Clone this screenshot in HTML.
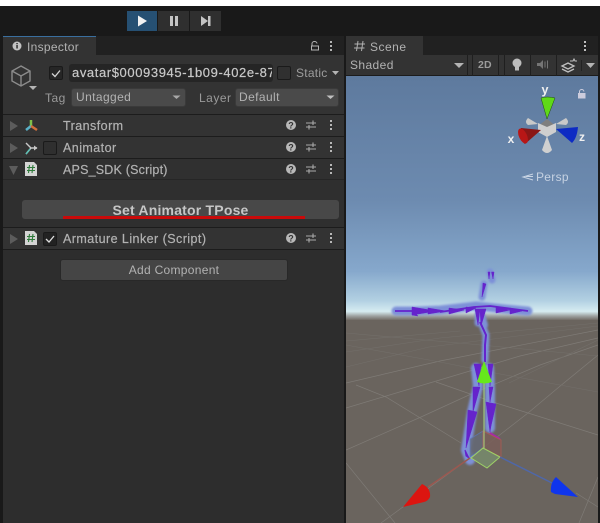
<!DOCTYPE html>
<html><head><meta charset="utf-8"><style>
html,body{margin:0;padding:0;background:#191919}
body{width:600px;height:523px;position:relative;overflow:hidden;font-family:"Liberation Sans",sans-serif;font-size:12px;color:#b2b2b2}
#w{position:absolute;left:0;top:0;width:600px;height:523px;filter:blur(.35px)}
.a{position:absolute;white-space:nowrap}
.ln{position:absolute;height:1px;left:3px;width:341px;background:#1c1c1c}
.row{position:absolute;left:3px;width:341px;height:21px;background:#333}
.t{position:absolute;font-size:12.5px;letter-spacing:.45px;white-space:nowrap;line-height:14px;-webkit-text-stroke:.2px #b2b2b2}
.dd{position:absolute;background:#4a4a4a;border-radius:3px;height:19px;border:1px solid #3a3a3a;box-sizing:border-box}
.cb{position:absolute;width:14px;height:14px;background:#222;border:1px solid #1a1a1a;border-radius:2px;box-sizing:border-box}
svg{position:absolute;left:0;top:0}
</style></head><body><div id="w">
<div class="a" style="left:0;top:0;width:600px;height:6px;background:#fff"></div>
<div class="a" style="left:127px;top:11px;width:30px;height:20px;background:#265073"></div>
<div class="a" style="left:158px;top:11px;width:31px;height:20px;background:#2f2f2f"></div>
<div class="a" style="left:190px;top:11px;width:31px;height:20px;background:#2f2f2f"></div>

<div class="a" style="left:3px;top:36px;width:341px;height:487px;background:#2d2d2d"></div>
<div class="a" style="left:3px;top:36px;width:341px;height:19px;background:#212121"></div>
<div class="a" style="left:3px;top:55px;width:341px;height:60px;background:#333"></div>
<div class="a" style="left:3px;top:36px;width:93px;height:19px;background:#333;border-top:1px solid #3a6f9f;box-sizing:border-box"></div>
<div class="a" style="left:27px;top:40px;font-size:12px;letter-spacing:.3px;line-height:14px">Inspector</div>

<div class="cb" style="left:49px;top:66px;background:#262626"></div>
<div class="a" style="left:69px;top:64px;width:204px;height:18px;background:#252525;border-radius:3px"></div>
<div class="a" style="left:72px;top:64px;width:200px;height:18px;color:#c8c8c8;font-size:13px;letter-spacing:.6px;line-height:18px;overflow:hidden;-webkit-text-stroke:.2px #c8c8c8">avatar$00093945-1b09-402e-87</div>
<div class="cb" style="left:277px;top:66px;background:#303030"></div>
<div class="a" style="left:296px;top:66px;letter-spacing:.25px;line-height:15px;color:#9d9d9d">Static</div>
<div class="a" style="left:45px;top:91px;letter-spacing:.5px;line-height:14px;color:#9a9a9a">Tag</div>
<div class="dd" style="left:71px;top:88px;width:115px;padding-left:4px;line-height:16px;letter-spacing:.4px">Untagged</div>
<div class="a" style="left:199px;top:91px;letter-spacing:.5px;line-height:14px;color:#9a9a9a">Layer</div>
<div class="dd" style="left:235px;top:88px;width:104px;padding-left:3px;line-height:16px;letter-spacing:.4px">Default</div>

<div class="ln" style="top:114px"></div>
<div class="row" style="top:115px"></div>
<div class="ln" style="top:136px"></div>
<div class="row" style="top:137px"></div>
<div class="ln" style="top:158px"></div>
<div class="row" style="top:159px;background:#303030;height:20px"></div>
<div class="ln" style="top:179px;background:#262626"></div>
<div class="a" style="left:3px;top:180px;width:341px;height:47px;background:#2f2f2f"></div>
<div class="ln" style="top:227px"></div>
<div class="row" style="top:228px"></div>
<div class="ln" style="top:249px"></div>

<div class="t" style="left:63px;top:119px">Transform</div>
<div class="cb" style="left:43px;top:141px;background:#2f2f2f"></div>
<div class="t" style="left:63px;top:141px">Animator</div>
<div class="t" style="left:63px;top:163px;letter-spacing:.2px">APS_SDK (Script)</div>
<div class="a" style="left:22px;top:200px;width:317px;height:19px;background:#484848;border-radius:3px"></div>
<div class="a" style="left:22px;top:202px;width:317px;text-align:center;font-size:14px;font-weight:bold;color:#c6c6c6;letter-spacing:.2px;line-height:17px">Set Animator TPose</div>
<div class="a" style="left:63px;top:216px;width:242px;height:2.5px;background:#c90a0a"></div>
<div class="cb" style="left:43px;top:232px"></div>
<div class="t" style="left:63px;top:232px">Armature Linker (Script)</div>
<div class="a" style="left:60px;top:259px;width:228px;height:22px;background:#454545;border:1px solid #282828;border-radius:3px;box-sizing:border-box;text-align:center;line-height:20px;letter-spacing:.3px">Add Component</div>

<div class="a" style="left:346px;top:36px;width:254px;height:487px;background:#191919"></div>
<div class="a" style="left:346px;top:36px;width:252px;height:19px;background:#212121"></div>
<div class="a" style="left:346px;top:36px;width:77px;height:19px;background:#333"></div>
<div class="a" style="left:370px;top:40px;letter-spacing:.5px;line-height:14px">Scene</div>
<div class="a" style="left:346px;top:55px;width:252px;height:21px;background:#333;border-bottom:1px solid #1c1c1c;box-sizing:border-box"></div>
<div class="a" style="left:350px;top:58px;letter-spacing:.4px;line-height:15px">Shaded</div>
<div class="a" style="left:478px;top:59px;font-size:10.5px;font-weight:bold;line-height:13px;color:#9c9c9c;letter-spacing:.2px">2D</div>

<svg width="600" height="523" viewBox="0 0 600 523">
<defs>
<linearGradient id="sky" gradientUnits="userSpaceOnUse" x1="0" y1="76" x2="0" y2="320">
<stop offset="0" stop-color="#5e7a9e"/><stop offset=".51" stop-color="#6d8bb0"/><stop offset=".8" stop-color="#86a8cc"/><stop offset=".92" stop-color="#b2d0e2"/><stop offset=".965" stop-color="#d6ecf1"/><stop offset=".985" stop-color="#9a9d9c"/><stop offset="1" stop-color="#726d67"/>
</linearGradient>
<filter id="gl" x="-30%" y="-30%" width="160%" height="160%"><feGaussianBlur stdDeviation="1"/></filter>
<clipPath id="sc"><rect x="346" y="76" width="252" height="447"/></clipPath>
</defs>

<path d="M138 15.500L147 21L138 26.500Z" fill="#f2f2f2"/>
<rect x="170" y="16" width="3" height="10" fill="#c4c4c4"/><rect x="175" y="16" width="3" height="10" fill="#c4c4c4"/>
<path d="M201 16L208 21L201 26Z" fill="#c4c4c4"/><rect x="208" y="16" width="2.500" height="10" fill="#c4c4c4"/>

<circle cx="17" cy="46" r="4.500" fill="#c2c2c2"/><rect x="16.300" y="45" width="1.500" height="3.500" fill="#2f2f2f"/><rect x="16.300" y="43" width="1.500" height="1.200" fill="#2f2f2f"/>
<path d="M312 45.500V43.500a2.500 2 0 0 1 5 0M311.500 46h7v4h-7z" fill="none" stroke="#b4b4b4" stroke-width="1"/>
<g fill="#b4b4b4"><rect x="330" y="41" width="2" height="2"/><rect x="330" y="45" width="2" height="2"/><rect x="330" y="49" width="2" height="2"/></g>
<g fill="#c0c0c0"><rect x="584" y="41" width="2" height="2"/><rect x="584" y="45" width="2" height="2"/><rect x="584" y="49" width="2" height="2"/></g>
<path d="M358 41L356.500 51M363 41L361.500 51M354.500 44H365M354 48H364.500" stroke="#b0b0b0" stroke-width="1" fill="none"/>

<path d="M21 66L30 71V81L21 86L12 81V71ZM12 71L21 76L30 71M21 76V86" fill="none" stroke="#8c8c8c" stroke-width="1.400"/>
<path d="M29 86H37L33 90Z" fill="#b4b4b4"/>
<path d="M52 73.500L55 76.500L60 70.500" fill="none" stroke="#d4d4d4" stroke-width="1.300"/>
<path d="M332 71H339L335.500 75Z" fill="#b4b4b4"/>
<path d="M172.500 95.500H180.500L176.500 99Z" fill="#a8a8a8"/>
<path d="M326.500 95.500H334.500L330.500 99Z" fill="#c0c0c0"/>

<g fill="#5c5c5c">
<path d="M10 121L18 126L10 131Z"/><path d="M10 143L18 148L10 153Z"/><path d="M9 166L18 166L13.500 175Z"/><path d="M10 234L18 239L10 244Z"/>
</g>
<path d="M31 120V126" stroke="#7fc24a" stroke-width="2.500"/><path d="M31 126L26 130" stroke="#5ab2c8" stroke-width="2.500"/><path d="M31 126L37 130" stroke="#d0703c" stroke-width="2.500"/>
<path d="M26 143L31 148L37 148M31 148L26 154" fill="none" stroke="#c8c8c8" stroke-width="1.400"/><path d="M26 154L30 149" stroke="#5cc0b4" stroke-width="1.500"/>
<path d="M34 145.500L37.500 148L34 150.500" fill="#c8c8c8"/>
<path d="M25 162H34L37 165V176H25Z" fill="#d4d4d4"/>
<path d="M29.500 165L28.500 173M33 165L32 173M27 167.500H35M27 170.500H35" stroke="#2e7a3a" stroke-width="1.100"/>
<path d="M25 231H34L37 234V245H25Z" fill="#d4d4d4"/>
<path d="M29.500 234L28.500 242M33 234L32 242M27 236.500H35M27 239.500H35" stroke="#2e7a3a" stroke-width="1.100"/>
<path d="M46 239L49 242L54 236" fill="none" stroke="#e0e0e0" stroke-width="1.300"/>

<g>
<circle cx="291" cy="125" r="5" fill="#b8b8b8"/><text x="291" y="128.500" font-size="9" font-weight="bold" text-anchor="middle" fill="#333" font-family="Liberation Sans">?</text>
<path d="M306 123H316M306 127H316M313 120.500V125M309 125V129.500" stroke="#aaa" stroke-width="1.100" fill="none"/>
<rect x="330" y="120" width="2" height="2" fill="#b8b8b8"/><rect x="330" y="124" width="2" height="2" fill="#b8b8b8"/><rect x="330" y="128" width="2" height="2" fill="#b8b8b8"/>
</g>
<g>
<circle cx="291" cy="147" r="5" fill="#b8b8b8"/><text x="291" y="150.500" font-size="9" font-weight="bold" text-anchor="middle" fill="#333" font-family="Liberation Sans">?</text>
<path d="M306 145H316M306 149H316M313 142.500V147M309 147V151.500" stroke="#aaa" stroke-width="1.100" fill="none"/>
<rect x="330" y="142" width="2" height="2" fill="#b8b8b8"/><rect x="330" y="146" width="2" height="2" fill="#b8b8b8"/><rect x="330" y="150" width="2" height="2" fill="#b8b8b8"/>
</g>
<g>
<circle cx="291" cy="169" r="5" fill="#b8b8b8"/><text x="291" y="172.500" font-size="9" font-weight="bold" text-anchor="middle" fill="#333" font-family="Liberation Sans">?</text>
<path d="M306 167H316M306 171H316M313 164.500V169M309 169V173.500" stroke="#aaa" stroke-width="1.100" fill="none"/>
<rect x="330" y="164" width="2" height="2" fill="#b8b8b8"/><rect x="330" y="168" width="2" height="2" fill="#b8b8b8"/><rect x="330" y="172" width="2" height="2" fill="#b8b8b8"/>
</g>
<g>
<circle cx="291" cy="238" r="5" fill="#b8b8b8"/><text x="291" y="241.500" font-size="9" font-weight="bold" text-anchor="middle" fill="#333" font-family="Liberation Sans">?</text>
<path d="M306 236H316M306 240H316M313 233.500V238M309 238V242.500" stroke="#aaa" stroke-width="1.100" fill="none"/>
<rect x="330" y="233" width="2" height="2" fill="#b8b8b8"/><rect x="330" y="237" width="2" height="2" fill="#b8b8b8"/><rect x="330" y="241" width="2" height="2" fill="#b8b8b8"/>
</g>

<path d="M454 63H464L459 68Z" fill="#b4b4b4"/>
<g fill="#1f1f1f"><rect x="467" y="55" width="1" height="21"/><rect x="472" y="55" width="1" height="21"/><rect x="498" y="55" width="1" height="21"/><rect x="504" y="55" width="1" height="21"/><rect x="530" y="55" width="1" height="21"/><rect x="556" y="55" width="1" height="21"/></g>
<circle cx="517" cy="63" r="4.500" fill="#bdbdbd"/><rect x="515" y="67" width="4" height="3.500" fill="#bdbdbd"/>
<path d="M537 63H540L543 60V69L540 66H537Z" fill="#757575"/><path d="M545 61.500V67.500M547.500 60.500V68.500" stroke="#757575" stroke-width="1"/>
<path d="M562 66L568 63L574 66L568 69ZM562 69L568 72L574 69" fill="none" stroke="#c0c0c0" stroke-width="1.300"/><path d="M570 61h3l1 -2 1 2h2" stroke="#c0c0c0" fill="none"/>
<rect x="581" y="60" width="1" height="11" fill="#222"/>
<path d="M586 63H595L590.500 68Z" fill="#b4b4b4"/>

<g clip-path="url(#sc)">
<rect x="346" y="76" width="252" height="244" fill="url(#sky)"/>
<rect x="346" y="320" width="252" height="203" fill="#6a645e"/>

<g stroke="#7f7b76" stroke-width=".7" fill="none">
<path d="M346 450L421 417L469 395L540 365L598 345"/>
<path d="M346 408L433 382L520 356L598 338"/>
<path d="M346 383L440 361L598 330"/>
<path d="M356 385L386 397L461 443"/>
<path d="M436 382L496 403L528 413L598 435"/>
<path d="M381 523L470 458L528 413L559 387L598 355"/>
<path d="M579 523L598 477"/>
<path d="M576 493L598 507"/>
<path d="M346 463L395 523"/>
</g>
<g stroke="#736f6a" stroke-width=".6" fill="none">
<path d="M346 367L429 347L598 326"/>
<path d="M346 352L440 338L598 323"/>
<path d="M346 341L460 331"/>
<path d="M346 345L440 362L500 374L598 392"/>
<path d="M346 333L470 344L598 356"/>
<path d="M509 383L598 340"/>
</g>

<g stroke="#7d90d8" fill="none" stroke-linecap="round" stroke-linejoin="round" filter="url(#gl)">
<path d="M396 311L416 311L440 310L476 306L505 309L528 311" stroke-width="9"/>
<path d="M479 308L478 323M481 322L486 335L485 360" stroke-width="7"/>
<path d="M479 308L484 325" stroke-width="8"/>
<path d="M490 272L492 280M484 284L482 297" stroke-width="7"/>
<path d="M476 368L478 386L472 412L466 450L470 460M489 368L490 390L490 428" stroke-width="10"/>
</g>
<g fill="#6523cc" stroke="#6523cc">
<path d="M395 311H440M440 312L474 307L490 306L528 311" stroke-width="1.800" fill="none"/>
<path d="M412 307L436 311L412 315Z M428 308L446 311L428 314Z M449 308L464 310L449 314Z M466 307L476 308L466 313Z M496 307L510 310L496 313Z M510 308L522 311L510 314Z M414 312L418 316L412 315Z" stroke-width=".5"/>
<path d="M475 309H480L478 325ZM480 309H486L481 326Z" stroke-width=".5"/>
<path d="M480 322L486 335L485 345L485 362" fill="none" stroke-width="2"/>
<path d="M488 272L490 272L489 279ZM491.500 272L494 272L493 279ZM483 283L486 284L482 297Z" stroke-width=".5"/>
<path d="M474 364H481L479 386ZM488 364H493L490 386Z" stroke-width=".5"/>
<path d="M473 387L480 387L473 412ZM489 387L493 387L490 402Z" stroke-width=".5"/>
<path d="M468 410L477 412L466 448ZM486 402L496 404L491 426L490 432Z" stroke-width=".5"/>
<path d="M465 450L469 458L466 456Z" stroke-width="1"/>
</g>
<path d="M490 433L500 439" stroke="#a32aa8" stroke-width="2"/>

<path d="M470 457V439L483 431L483 448Z" fill="#656a78" stroke="#5c78b8" stroke-width=".8" opacity=".8"/>
<path d="M483 431L501 440V457L483 448Z" fill="#7a5f5a" stroke="#b85850" stroke-width=".8" opacity=".85"/>
<path d="M471 458L483 448L500 457L487 468Z" fill="#75856a" stroke="#9ed266" stroke-width="1"/>
<path d="M484 381V448" stroke="#a6d67c" stroke-width="1"/>
<path d="M470 458L428 487" stroke="#9b5850" stroke-width="1.500"/>
<path d="M500 457L556 485" stroke="#4f67a8" stroke-width="1.500"/>
<path d="M484 361L477 382Q484 385 492 382Z" fill="#66e81c"/>
<path d="M403 507L422 484Q431 488 430 497Q428 501 424 502Z" fill="#dc1510"/>
<path d="M578 497L556 477Q550 483 551 492L555 494Z" fill="#0f35ec"/>

<path d="M547 119L541 98Q547 96 555 98Z" fill="#5fd918" stroke="#204a10" stroke-width=".5"/>
<path d="M547 119L538 126L547 130L556 126Z" fill="#7f7f7f"/>
<path d="M538 123L547 127L556 123V132L547 137L538 132Z" fill="#cfcfcf"/>
<path d="M538 124L528 118Q524 122 528 125Z" fill="#c9c9c9"/>
<path d="M556 124L566 118Q570 122 566 125Z" fill="#c9c9c9"/>
<path d="M547 136L542 150Q547 156 552 150Z" fill="#d0d0d0"/>
<path d="M541 130L521 128Q517 138 525 144Z" fill="#8a1616"/>
<ellipse cx="523" cy="136" rx="4" ry="8" transform="rotate(-25 523 136)" fill="#b81616"/>
<path d="M556 129L578 127Q577 138 572 143Z" fill="#0d2bc4"/>
<text x="545" y="94" font-family="Liberation Sans" font-size="12.500" font-weight="bold" fill="#f0f0f0" text-anchor="middle">y</text>
<text x="511" y="143" font-family="Liberation Sans" font-size="12" font-weight="bold" fill="#f0f0f0" text-anchor="middle">x</text>
<text x="582" y="141" font-family="Liberation Sans" font-size="12" font-weight="bold" fill="#f0f0f0" text-anchor="middle">z</text>
<rect x="578" y="93" width="7.500" height="5.500" fill="#ccd"/><path d="M579.500 93V91.500a2.200 2 0 0 1 4.400 0" fill="none" stroke="#ccd" stroke-width="1"/>
<path d="M533 174L523 177L533 180M533 176.500H526" fill="none" stroke="#c8d4e4" stroke-width="1"/>
<text x="536" y="181" font-family="Liberation Sans" font-size="12" fill="#c6d2e2" letter-spacing=".3">Persp</text>
</g>
</svg>
</div></body></html>
